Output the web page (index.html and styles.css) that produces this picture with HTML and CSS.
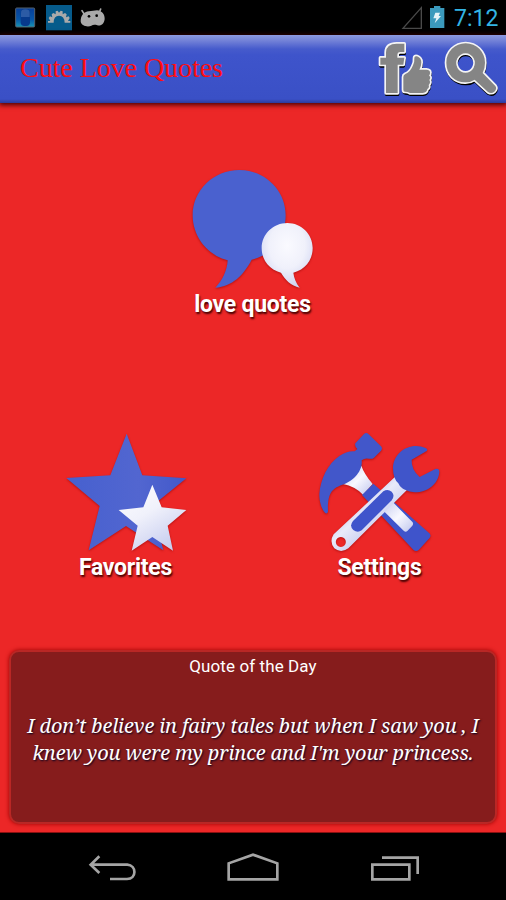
FILE: index.html
```html
<!DOCTYPE html>
<html lang="en">
<head>
    <meta charset="UTF-8">
    <meta name="viewport" content="width=device-width, initial-scale=1.0">
    <title>Cute Love Quotes</title>
    <link rel="stylesheet" href="styles.css">
</head>
<body>
    <div class="status-bar">
        <svg class="notifications" viewBox="0 0 330 105">
            <defs>
                <linearGradient id="app" x1="0" y1="0" x2="0" y2="1">
                    <stop offset="0" stop-color="#073e98"/>
                    <stop offset=".6" stop-color="#0756a8"/>
                    <stop offset="1" stop-color="#1795b4"/>
                </linearGradient>
            </defs>
            <rect x="47" y="24" width="57" height="57" rx="3" fill="url(#app)" stroke="#53606c" stroke-width="3"/>
            <rect x="62" y="27" width="28" height="51" rx="11" fill="#073a8c"/>
            <path d="M63 51V38Q63 28 76 28T89 38V51Z" fill="#2c5ba5"/>
            <rect x="138" y="15" width="78" height="76" fill="#065b8b"/>
            <path d="M144 68V63H151L146 54L150 49L157 52L155 43L160 39L167 43V34L173 32L177 38L182 32L188 34V43L195 39L200 43L198 52L206 49L209 54L204 63H211V68H194Q193 47 177 47T161 68Z" fill="#aaa"/>
            <path d="M246 32L253 43M302 27L298 37" stroke="#aaa" stroke-width="5" stroke-linecap="round"/>
            <path d="M242 64C242 47 251 35 267 34L291 31C306 33 315 43 314 57C313 70 304 79 292 76C285 74 279 74 274 77C265 82 243 79 242 64Z" fill="#aaa"/>
            <circle cx="267" cy="49" r="4"/>
            <circle cx="290" cy="47" r="4"/>
        </svg>
        <div class="status-right">
            <svg class="signal" viewBox="441 0 150 105">
                <path d="M505 23V85H450Z" fill="none" stroke="#4a4a4a" stroke-width="4"/>
                <path d="M531 24H543V18H562V24H574V84H531Z" fill="#3b9abd"/>
                <path d="M547 38H561L557 48H564L545 70L550 55H541Z" fill="#e4f3f8"/>
            </svg>
            <span class="clock">7:12</span>
        </div>
    </div>

    <header class="header">
        <h1>Cute Love Quotes</h1>
        <svg class="header-icons" viewBox="369 105 390 204">
            <defs>
                <g id="actions">
                    <path d="M399 279V194H382V173H399V157Q400 131 431 131H454V156H442Q433 156 433 165V173H454L451 194H434V279Z"/>
                    <path d="M451 231Q451 225 457 222Q472 217 480 196Q485 187 484 174Q484 167 492 169Q505 174 505 187Q505 199 499 209H520Q532 210 531 218Q532 223 528 226Q535 233 529 240Q534 248 527 255Q530 263 523 267Q522 278 509 279H471Q464 275 456 275Q451 275 451 269Z"/>
                    <path fill-rule="evenodd" d="M638 130C606 130 580 155 580 188C580 223 606 248 638 247Q653 247 665 239L705 276Q715 282 724 275Q733 266 727 258L689 219Q696 205 696 188C696 155 670 130 638 130ZM638 160A28 29 0 1 1 637 160Z"/>
                </g>
            </defs>
            <use href="#actions" class="icon-shadow" x="1" y="5"/>
            <use href="#actions" class="icon-edge"/>
            <use href="#actions" class="icon-dark"/>
        </svg>
    </header>

    <main class="main">
        <div class="menu-item love">
            <svg class="menu-icon" viewBox="0 0 450 390">
                <defs>
                    <radialGradient id="bubble" cx=".5" cy=".35" r=".7">
                        <stop offset="0" stop-color="#fafaff"/>
                        <stop offset=".5" stop-color="#f0f1fb"/>
                        <stop offset="1" stop-color="#c9cff0"/>
                    </radialGradient>
                </defs>
                <path d="M178 30C101 30 38 91 38 166C38 229 81 285 143 301C142 330 127 362 106 383C157 379 190 346 215 299C275 286 317 230 317 166C317 91 255 30 178 30Z" fill="#4a61cf"/>
                <path d="M322 189C280 189 245 222 245 264C245 301 269 329 303 338C315 359 333 377 359 383C348 369 342 354 340 338C375 329 398 301 398 264C398 222 364 189 322 189Z" fill="url(#bubble)"/>
            </svg>
            <span>love quotes</span>
        </div>

        <div class="menu-row">
            <div class="menu-item">
                <svg class="menu-icon" viewBox="-12 0 450 390">
                    <defs>
                        <linearGradient id="star" x1="0" y1="0" x2=".6" y2="1">
                            <stop offset="0" stop-color="#fff"/>
                            <stop offset=".5" stop-color="#f0f1fb"/>
                            <stop offset="1" stop-color="#c9cff0"/>
                        </linearGradient>
                        <linearGradient id="blue-star">
                            <stop offset="0" stop-color="#4660cf"/>
                            <stop offset=".6" stop-color="#5266d0"/>
                            <stop offset="1" stop-color="#4258ca"/>
                        </linearGradient>
                    </defs>
                    <path d="M215 29L262 154L394 163L291 246L325 379L213 306L101 379L134 246L34 162L166 154Z" fill="url(#blue-star)"/>
                    <path d="M292 182L320 250L394 258L338 305L354 380L292 339L230 380L248 305L191 258L265 250Z" fill="url(#star)"/>
                </svg>
                <span>Favorites</span>
            </div>
            <div class="menu-item">
                <svg class="menu-icon" viewBox="0 0 450 390">
                    <defs>
                        <linearGradient id="steel" x1="0" y1="0" x2="1" y2="1">
                            <stop offset="0" stop-color="#c8cdf0"/>
                            <stop offset=".5" stop-color="#f8f8ff"/>
                            <stop offset="1" stop-color="#bfc6ed"/>
                        </linearGradient>
                        <linearGradient id="handle" gradientUnits="userSpaceOnUse" x1="155" y1="235" x2="215" y2="300">
                            <stop offset="0" stop-color="#c8cdf0"/>
                            <stop offset=".4" stop-color="#e9eafa"/>
                            <stop offset="1" stop-color="#cfd4f2"/>
                        </linearGradient>
                    </defs>
                    <!-- hammer -->
                    <path d="M169 125Q177 149 203 180L174 212Q150 187 114 180Q151 159 169 125Z" fill="url(#steel)"/>
                    <path d="M171 213L205 179L373 328Q380 335 373 343L341 378Q333 385 325 377Z" fill="#3f54cb"/>
                    <path d="M264 235L323 295Q326 300 322 305L307 321Q302 326 296 320L236 261Z" fill="url(#steel)"/>
                    <path d="M177 30Q184 24 191 31L228 67Q234 74 228 80L207 101Q201 106 192 104Q179 101 170 109C174 143 141 174 112 182C74 195 68 216 69 263Q66 272 60 266C48 253 43 231 43 211C46 165 69 119 103 96Q126 80 149 82L157 75Q148 66 151 58Z" fill="#4257ca"/>
                    <!-- wrench -->
                    <path d="M272 157L308 196L130 373Q108 389 88 373Q72 353 86 331ZM107 339A15 15 0 1 0 108 339Z" fill="url(#handle)" fill-rule="evenodd"/>
                    <path d="M144 291L235 202Q248 193 260 203Q271 214 260 229L170 319Q158 328 145 318Q132 306 144 291Z" fill="#3f54cb"/>
                    <path d="M366 80L320 107Q318 136 344 159L391 135Q403 132 403 144C400 179 370 205 329 205Q313 204 300 197Q287 193 280 178Q264 164 264 132C265 94 297 66 333 66Q348 66 362 72Q369 75 366 80Z" fill="#4055ca"/>
                </svg>
                <span>Settings</span>
            </div>
        </div>

        <section class="quote-box">
            <h2>Quote of the Day</h2>
            <p>I don’t believe in fairy tales but when I saw you , I<br>knew you were my prince and I'm your princess.</p>
        </section>
    </main>

    <nav class="nav-bar">
        <svg class="nav-back" viewBox="84 60 150 105">
            <path d="M118 79L92 104L118 129M94 104H202C230 106 231 147 201 147H150"/>
        </svg>
        <svg class="nav-home" viewBox="498 60 162 105">
            <path d="M506 148V100L579 74L652 100V148Z"/>
        </svg>
        <svg class="nav-home" viewBox="924 60 162 105">
            <path d="M937 104H1048V148H937ZM966 83H1073V132"/>
        </svg>
    </nav>
</body>
</html>
```
FILE: styles.css
```css
* {
    box-sizing: border-box;
}

body {
    margin: 0;
    width: 506px;
    height: 900px;
    display: flex;
    flex-direction: column;
    background-color: #000;
    color: #fff;
    font-family: Roboto, sans-serif;
    overflow: hidden;
}

svg {
    display: block;
    flex: none;
}

.status-bar {
    height: 35px;
    display: flex;
    justify-content: space-between;
    background-color: #000;
}

.notifications {
    width: 110px;
    height: 35px;
}

.status-right {
    display: flex;
    width: 106px;
}

.signal {
    width: 50px;
    height: 35px;
}

.clock {
    padding-left: 4px;
    font-size: 23px;
    line-height: 37px;
    color: #33b5e5;
}

.header {
    height: 68px;
    flex: none;
    display: flex;
    justify-content: space-between;
    background: linear-gradient(#8d9ae0 0, #7180d7 6px, #465bcc 14px, #3e54cb 20px, #3a50c6 64px, #2b3b9d 68px);
    box-shadow: 0 1px 5px 1px #400;
    z-index: 1;
}

.header h1 {
    margin: 0;
    padding-left: 20px;
    font-family: "Liberation Serif", serif;
    font-size: 28px;
    font-weight: normal;
    letter-spacing: -0.05px;
    line-height: 66px;
    color: #ff0d12;
    white-space: nowrap;
}

.header-icons {
    width: 130px;
    height: 68px;
}

.icon-shadow {
    fill: #000;
    stroke: #000;
    stroke-width: 8;
    stroke-linejoin: round;
}

.icon-edge {
    fill: #f4f4f4;
    stroke: #f4f4f4;
    stroke-width: 10;
    stroke-linejoin: round;
}

.icon-dark {
    fill: #858585;
}

.main {
    height: 730px;
    flex: none;
    display: flex;
    flex-direction: column;
    background-color: #ec2727;
    border-bottom: 1px solid #811;
}

.menu-item {
    width: 150px;
    display: flex;
    flex-direction: column;
    align-items: center;
    font-size: 23px;
    font-weight: bold;
    letter-spacing: -0.25px;
    line-height: 28px;
    text-shadow: 1px 2px 2px #400;
    white-space: nowrap;
}

.love {
    margin: 57px 0 0 180px;
}

.love span {
    margin-top: 1px;
    margin-right: 5px;
}

.menu-icon {
    width: 150px;
    height: 130px;
    filter: drop-shadow(0 1px 1px #8008);
}

.menu-row {
    display: flex;
    justify-content: space-between;
    margin-top: 105px;
    padding: 0 51px;
}

.menu-row span {
    margin-right: 1px;
}

.quote-box {
    margin: 68px 9px 0;
    height: 174px;
    padding-top: 2px;
    border: 2px solid #b92725;
    border-radius: 10px;
    background-color: #861c1c;
    box-shadow: 0 0 4px #900;
    text-align: center;
}

.quote-box h2 {
    margin: 0;
    font-size: 17px;
    font-weight: normal;
    letter-spacing: 0.1px;
    line-height: 24px;
}

.quote-box p {
    margin: 34px 0 0;
    font-family: "Droid Serif", "Noto Serif", "DejaVu Serif Condensed", "DejaVu Serif", serif;
    font-size: 20px;
    font-style: italic;
    letter-spacing: -0.14px;
    line-height: 27px;
    text-shadow: 1px 1px 2px #002;
    white-space: nowrap;
}

.nav-bar {
    height: 67px;
    display: flex;
    justify-content: space-between;
    padding: 17px 84px 0 88px;
}

.nav-bar svg {
    width: 54px;
    height: 35px;
    fill: none;
    stroke: #a5a5a5;
    stroke-width: 8;
}

.nav-bar .nav-back {
    width: 50px;
}
```
